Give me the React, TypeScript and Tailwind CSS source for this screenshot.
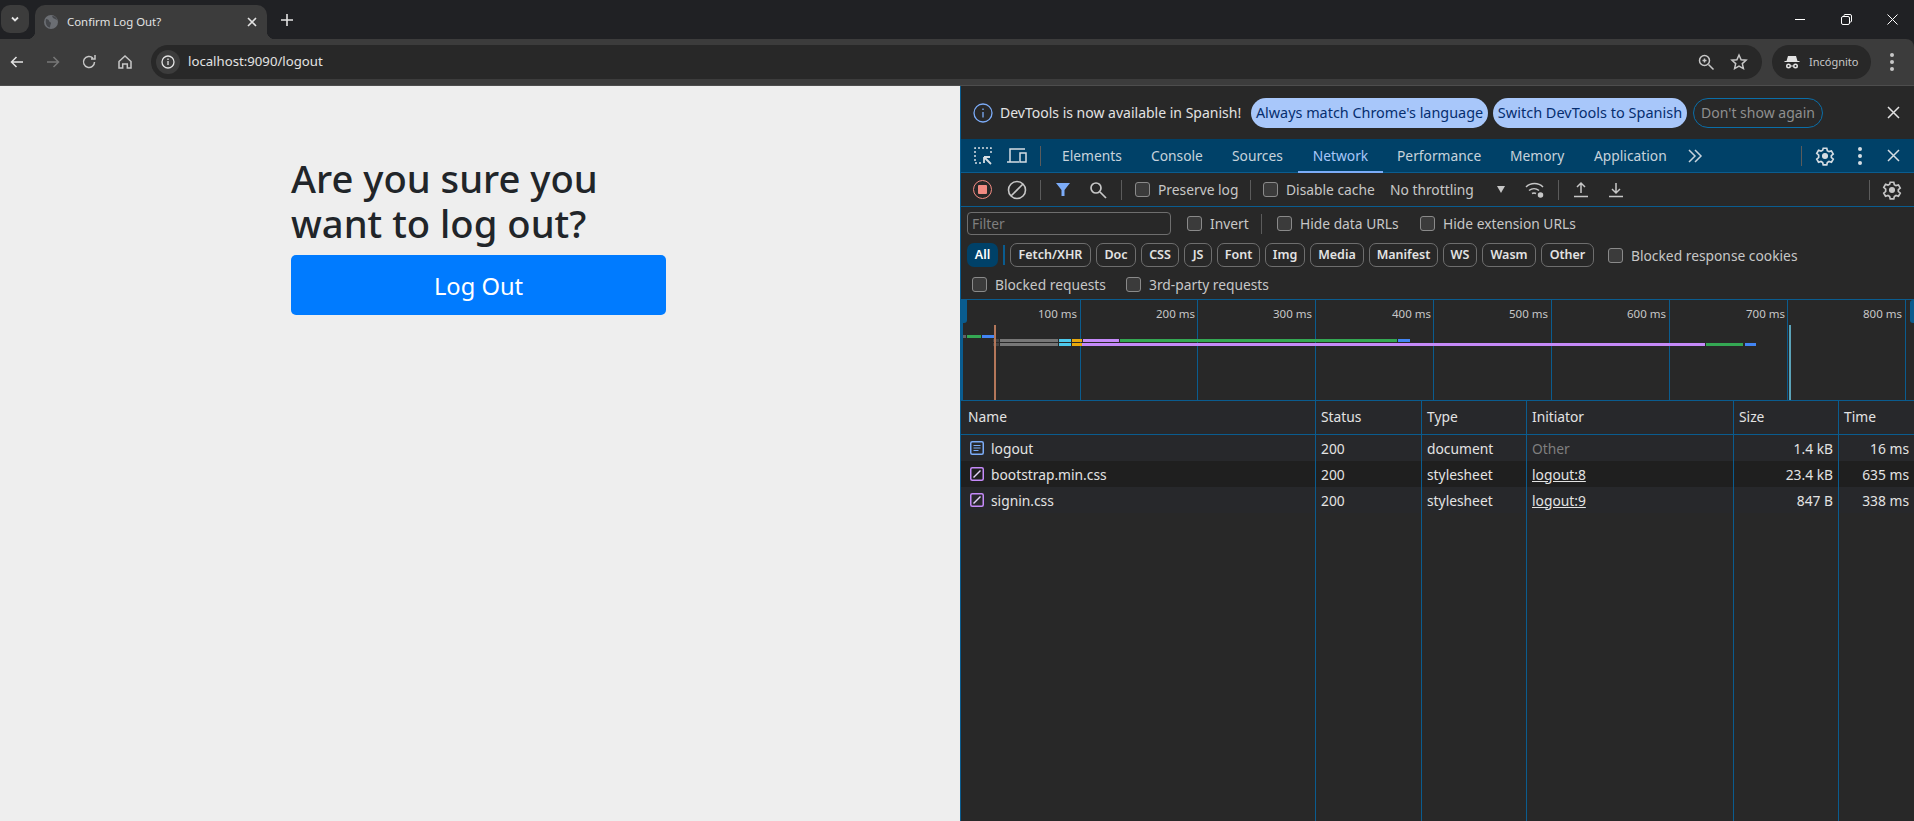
import type { ReactNode } from 'react';

const FONT = "font-['Noto_Sans','Open_Sans',sans-serif]";

const chips = [
  { name: 'Fetch/XHR', w: 'w-[81px]' },
  { name: 'Doc', w: 'w-[40px]' },
  { name: 'CSS', w: 'w-[38px]' },
  { name: 'JS', w: 'w-[28px]' },
  { name: 'Font', w: 'w-[43px]' },
  { name: 'Img', w: 'w-[40px]' },
  { name: 'Media', w: 'w-[54px]' },
  { name: 'Manifest', w: 'w-[69px]' },
  { name: 'WS', w: 'w-[34px]' },
  { name: 'Wasm', w: 'w-[54px]' },
  { name: 'Other', w: 'w-[53px]' },
];

const ticks = [
  { label: '100 ms', line: 'left-[119px]', text: 'right-[837px]' },
  { label: '200 ms', line: 'left-[236px]', text: 'right-[719px]' },
  { label: '300 ms', line: 'left-[354px]', text: 'right-[602px]' },
  { label: '400 ms', line: 'left-[472px]', text: 'right-[483px]' },
  { label: '500 ms', line: 'left-[590px]', text: 'right-[366px]' },
  { label: '600 ms', line: 'left-[708px]', text: 'right-[248px]' },
  { label: '700 ms', line: 'left-[826px]', text: 'right-[129px]' },
  { label: '800 ms', line: 'left-[944px]', text: 'right-[12px]' },
];

const bars = [
  'left-[2px] top-[35px] w-[3px] bg-[#5f6368]',
  'left-[6px] top-[35px] w-[14px] bg-[#34a853]',
  'left-[21px] top-[35px] w-[12px] bg-[#4285f4]',
  'left-[32px] top-[39px] w-[6px] bg-[#444]',
  'left-[39px] top-[39px] w-[58px] bg-[#777]',
  'left-[98px] top-[39px] w-[12px] bg-[#4dc9ec]',
  'left-[111px] top-[39px] w-[10px] bg-[#e8a90c]',
  'left-[122px] top-[39px] w-[36px] bg-[#c58af9]',
  'left-[159px] top-[39px] w-[277px] bg-[#34a853]',
  'left-[437px] top-[39px] w-[12px] bg-[#4285f4]',
  'left-[32px] top-[43px] w-[6px] bg-[#444]',
  'left-[39px] top-[43px] w-[58px] bg-[#777]',
  'left-[98px] top-[43px] w-[12px] bg-[#4dc9ec]',
  'left-[111px] top-[43px] w-[10px] bg-[#e8a90c]',
  'left-[121px] top-[43px] w-[623px] bg-[#c58af9]',
  'left-[745px] top-[43px] w-[37px] bg-[#34a853]',
  'left-[784px] top-[43px] w-[11px] bg-[#4285f4]',
];

type Cell = { text: string; kind?: 'muted' | 'link' };

const columns: { title: string; w: string; right?: boolean; cells: Cell[] }[] = [
  { title: 'Status', w: 'w-[106px]', cells: [{ text: '200' }, { text: '200' }, { text: '200' }] },
  { title: 'Type', w: 'w-[105px]', cells: [{ text: 'document' }, { text: 'stylesheet' }, { text: 'stylesheet' }] },
  {
    title: 'Initiator',
    w: 'w-[207px]',
    cells: [
      { text: 'Other', kind: 'muted' },
      { text: 'logout:8', kind: 'link' },
      { text: 'logout:9', kind: 'link' },
    ],
  },
  { title: 'Size', w: 'w-[105px]', right: true, cells: [{ text: '1.4 kB' }, { text: '23.4 kB' }, { text: '847 B' }] },
  { title: 'Time', w: 'w-[75px]', right: true, cells: [{ text: '16 ms' }, { text: '635 ms' }, { text: '338 ms' }] },
];

function Icon({ children, size = 18, className = '' }: { children: ReactNode; size?: number; className?: string }) {
  return (
    <svg width={size} height={size} viewBox="0 0 18 18" fill="none" stroke="currentColor" strokeWidth={1.5} className={className}>
      {children}
    </svg>
  );
}

function Gear({ className = '' }: { className?: string }) {
  return (
    <Icon className={className} size={20}>
      <path d="M7.4 2h3.2l.5 2.2 1.5.9 2.2-.7 1.6 2.8-1.7 1.5v1.600l1.700 1.500-1.600 2.800-2.200-.7-1.500.9-.5 2.200H7.400l-.5-2.200-1.500-.9-2.200.7-1.600-2.800 1.700-1.500V8.200L1.600 6.700l1.600-2.800 2.200.7 1.500-.9z" />
      <circle cx="9" cy="9" r="2" fill="currentColor" />
    </Icon>
  );
}

function Kebab({ className = '' }: { className?: string }) {
  return (
    <div className={`flex flex-col items-center gap-[3px] ${className}`}>
      <span className="size-[4px] rounded-full bg-current" />
      <span className="size-[4px] rounded-full bg-current" />
      <span className="size-[4px] rounded-full bg-current" />
    </div>
  );
}

function Check({ label, className = '' }: { label: string; className?: string }) {
  return (
    <div className={`flex items-center ${className}`}>
      <span className="size-[15px] shrink-0 rounded-[3px] border border-[#8a8a8a] bg-[#3b3b3b]" />
      <span className="ml-[8px] whitespace-nowrap pt-[2px] text-[#c7c7c7]">{label}</span>
    </div>
  );
}

function Divider({ className = '' }: { className?: string }) {
  return <span className={`h-[20px] w-px shrink-0 bg-[#5b5b5b] ${className}`} />;
}

function ResourceIcon({ doc }: { doc: boolean }) {
  const tone = doc ? '#7cacf8' : '#c58af9';
  return (
    <svg width="14" height="14" viewBox="0 0 14 14" fill="none" className="mr-[7px] shrink-0">
      <rect x=".75" y=".75" width="12.5" height="12.5" rx="1.5" stroke={tone} strokeWidth="1.5" />
      {doc ? (
        <path d="M3.500 4.500h7M3.500 7h7M3.500 9.500h5" stroke={tone} strokeWidth="1.200" />
      ) : (
        <path d="M3.500 10.500 10.500 3.500" stroke="#e3d4f7" strokeWidth="1.500" />
      )}
    </svg>
  );
}

function BrowserChrome() {
  return (
    <header className="shrink-0 bg-[#202124] text-[#e3e3e3]">
      <div className="flex h-[39px] items-end">
        <button className="mb-[6px] ml-[1px] flex h-[28px] w-[28px] items-center justify-center rounded-[9px] bg-[#3c3c3c]">
          <svg width="12" height="12" viewBox="0 0 12 12" fill="none" stroke="currentColor" strokeWidth="1.8">
            <path d="m3 4.500 3 3 3-3" />
          </svg>
        </button>
        <div className="relative ml-[6px] flex h-[34px] w-[232px] items-center rounded-t-[10px] bg-[#3c3c3c] pl-[9px] pr-[10px]">
          <span className="absolute bottom-0 left-[-8px] size-[8px] bg-[radial-gradient(circle_at_0_0,#202124_8px,#3c3c3c_8.5px)]" />
          <span className="absolute bottom-0 right-[-8px] size-[8px] bg-[radial-gradient(circle_at_100%_0,#202124_8px,#3c3c3c_8.5px)]" />
          <svg width="14" height="14" viewBox="0 0 14 14" className="shrink-0">
            <circle cx="7" cy="7" r="7" fill="#6b6e73" />
            <path d="M2 4c2 0 3 1 3 2s2 1 2 2-1 2-1 4.500C3 12 1 9 2 4Zm6-3 1 2 2 1 2 1c0-2-2-4-5-4Z" fill="#45474b" />
          </svg>
          <span className="ml-[9px] flex-1 truncate text-[11.4px]">Confirm Log Out?</span>
          <svg width="10" height="10" viewBox="0 0 10 10" stroke="currentColor" strokeWidth="1.6">
            <path d="m1 1 8 8M9 1 1 9" />
          </svg>
        </div>
        <svg width="14" height="14" viewBox="0 0 14 14" stroke="#e3e3e3" strokeWidth="1.6" className="mb-[12px] ml-[13px]">
          <path d="M7 1v12M1 7h12" />
        </svg>
        <div className="mb-[14px] ml-auto flex items-center">
          <span className="mr-[36px] h-px w-[10px] bg-white" />
          <svg width="11" height="11" viewBox="0 0 11 11" fill="none" stroke="#fff" className="mr-[35px]">
            <path d="M3 2.500V1.500a1 1 0 0 1 1-1h5a1.500 1.500 0 0 1 1.500 1.500v5a1 1 0 0 1-1 1H8.500" />
            <rect x=".5" y="2.500" width="8" height="8" rx="1.500" />
          </svg>
          <svg width="11" height="11" viewBox="0 0 11 11" stroke="#fff" className="mr-[16px]">
            <path d="m.5.5 10 10M10.500.5l-10 10" />
          </svg>
        </div>
      </div>
      <div className="flex h-[47px] items-center rounded-tr-[8px] border-b border-[#4d4d4d] bg-[#3c3c3c]">
        <Icon className="ml-[8px]" size={18}>
          <path d="M15 9H3.500M8.500 4l-5 5 5 5" />
        </Icon>
        <Icon className="ml-[18px] text-[#777]" size={18}>
          <path d="M3 9h11.500M9.500 4l5 5-5 5" />
        </Icon>
        <Icon className="ml-[18px] text-[#c7c7c7]" size={18}>
          <path d="M14.500 9a5.500 5.500 0 1 1-1.600-3.900M15 2v4h-4" />
        </Icon>
        <Icon className="ml-[18px] text-[#c7c7c7]" size={18}>
          <path d="M3 8.500 9 3l6 5.500V15h-3.700v-4H6.700v4H3z" />
        </Icon>
        <div className="ml-[17px] flex h-[34px] w-[1611px] items-center rounded-full bg-[#282828] pl-[5px]">
          <span className="flex size-[24px] items-center justify-center rounded-full bg-[#3c3c3c]">
            <svg width="14" height="14" viewBox="0 0 14 14" fill="none" stroke="#e3e3e3" strokeWidth="1.300">
              <circle cx="7" cy="7" r="6" />
              <path d="M7 6v4M7 3.600v1.300" />
            </svg>
          </span>
          <span className="ml-[8px] text-[13.2px]">localhost:9090/logout</span>
          <svg width="18" height="18" viewBox="0 0 18 18" fill="none" stroke="#c7c7c7" strokeWidth="1.500" className="ml-auto">
            <circle cx="7.500" cy="7.500" r="5" />
            <path d="m11.500 11.500 5 5M5.500 7.500h4M7.500 5.500v4" />
          </svg>
          <svg width="18" height="18" viewBox="0 0 18 18" fill="none" stroke="#c7c7c7" strokeWidth="1.500" className="ml-[15px] mr-[14px]">
            <path d="m9 2 2.100 4.700 5 .5-3.800 3.400 1.100 5L9 13l-4.400 2.600 1.100-5L1.900 7.200l5-.5z" />
          </svg>
        </div>
        <div className="ml-[10px] flex h-[34px] w-[99px] items-center rounded-full bg-[#282828] pl-[12px] text-[11px] text-[#c7c7c7]">
          <svg width="16" height="16" viewBox="0 0 16 16" fill="#e3e3e3">
            <path d="M4 2h8l1.500 5h2v1H.5V7h2zM4.500 9.500a2.500 2.500 0 1 0 0 5 2.500 2.500 0 0 0 0-5Zm7 0a2.500 2.500 0 1 0 0 5 2.500 2.500 0 0 0 0-5Zm-7 1.500a1 1 0 1 1 0 2 1 1 0 0 1 0-2Zm7 0a1 1 0 1 1 0 2 1 1 0 0 1 0-2ZM7 11.500h2v1H7z" />
          </svg>
          <span className="ml-[9px]">Incógnito</span>
        </div>
        <Kebab className="ml-[19px] text-[#c7c7c7]" />
      </div>
    </header>
  );
}

function LogoutPage() {
  return (
    <main className="w-[960px] shrink-0 bg-[#eeeeee] pl-[291px] pt-[70px] text-[#212529]">
      <h2 className="w-[375px] text-[38.2px] font-medium leading-[45px]">Are you sure you want to log out?</h2>
      <button className="mt-[9px] h-[60px] w-[375px] rounded-[5px] bg-[#007bff] pt-[4px] text-[23.7px] text-white">Log Out</button>
    </main>
  );
}

function Overview() {
  return (
    <div className="relative h-[101px] shrink-0 border-b border-[#0a5c8f] text-[11.5px] text-[#c7c7c7]">
      {ticks.map((t) => (
        <div key={t.label}>
          <span className={`absolute top-0 h-full w-px bg-[#0a5c8f] ${t.line}`} />
          <span className={`absolute top-[5px] leading-[18px] ${t.text}`}>{t.label}</span>
        </div>
      ))}
      {bars.map((b) => (
        <span key={b} className={`absolute h-[3px] ${b}`} />
      ))}
      <span className="absolute left-[33px] top-[25px] h-[75px] w-[2px] bg-[#b4775a]" />
      <span className="absolute left-[828px] top-[25px] h-[75px] w-[2px] bg-[#5ba3b8]" />
      <span className="absolute left-0 top-0 h-[100px] w-[2px] bg-[#0a5c8f]" />
      <span className="absolute left-0 top-0 h-[23px] w-[6px] rounded-br-[3px] bg-[#0a5c8f]" />
      <span className="absolute right-0 top-0 h-[23px] w-[4px] rounded-l-[3px] bg-[#0a5c8f]" />
    </div>
  );
}

function NetworkTable() {
  const rowTone = ['bg-[#27282b]', 'bg-[#1f1f1f]', 'bg-[#27282b]'];
  const names = ['logout', 'bootstrap.min.css', 'signin.css'];
  return (
    <div className="flex min-h-0 flex-1 bg-[#282828] text-[13.8px] text-[#e3e3e3]">
      <div className="w-[355px] shrink-0 border-r border-[#0a5c8f]">
        <div className="flex h-[34px] items-center border-b border-[#0a5c8f] bg-[#27282b] pl-[7px]">Name</div>
        {names.map((name, i) => (
          <div key={name} className={`flex h-[26px] items-center pl-[9px] ${rowTone[i]}`}>
            <ResourceIcon doc={i === 0} />
            <span className="pt-[2px]">{name}</span>
          </div>
        ))}
      </div>
      {columns.map((col) => (
        <div key={col.title} className={`shrink-0 border-r border-[#0a5c8f] last:border-r-0 ${col.w}`}>
          <div className="flex h-[34px] items-center border-b border-[#0a5c8f] bg-[#27282b] px-[5px]">{col.title}</div>
          {col.cells.map((cell, i) => (
            <div
              key={i}
              className={`flex h-[26px] items-center px-[5px] pt-[2px] ${rowTone[i]} ${col.right ? 'justify-end' : ''} ${cell.kind === 'muted' ? 'text-[#7f7f7f]' : ''} ${cell.kind === 'link' ? 'underline' : ''}`}
            >
              {cell.text}
            </div>
          ))}
        </div>
      ))}
    </div>
  );
}

function DevTools() {
  return (
    <section className="flex min-w-0 flex-1 flex-col border-l border-[#0a5c8f] bg-[#282828] text-[13.8px]">
      {/* language infobar */}
      <div className="flex h-[53px] shrink-0 items-center text-[#e3e3e3]">
        <svg width="20" height="20" viewBox="0 0 20 20" fill="none" stroke="#7cacf8" strokeWidth="1.300" className="ml-[12px]">
          <circle cx="10" cy="10" r="9" />
          <path d="M10 9v5.500M10 5.500V7" />
        </svg>
        <span className="ml-[7px] w-[244px] whitespace-nowrap text-[14px]">DevTools is now available in Spanish!</span>
        <button className="ml-[7px] h-[30px] w-[237px] whitespace-nowrap rounded-full bg-[#a8c7fa] text-[14.4px] text-[#062e6f]">Always match Chrome's language</button>
        <button className="ml-[5px] h-[30px] w-[194px] whitespace-nowrap rounded-full bg-[#a8c7fa] text-[14.5px] text-[#062e6f]">Switch DevTools to Spanish</button>
        <button className="ml-[6px] h-[30px] w-[130px] whitespace-nowrap rounded-full border border-[#0a6ea8] text-[14px] text-[#8f8f8f]">Don't show again</button>
        <svg width="13" height="13" viewBox="0 0 13 13" stroke="#e3e3e3" strokeWidth="1.500" className="ml-[64px]">
          <path d="m1 1 11 11M12 1 1 12" />
        </svg>
      </div>

      {/* panel tabs */}
      <div className="flex h-[34px] shrink-0 items-center border-b border-[#0a5c8f] bg-[#004168] text-[#c7d3dc]">
        <svg width="20" height="20" viewBox="0 0 20 20" fill="none" stroke="#d5dde3" strokeWidth="1.500" strokeDasharray="2 2" className="ml-[12px]">
          <path d="M8 17H2V2h16v6" />
          <path d="M11 11h6M11 11v6M11 11l7 7" strokeDasharray="none" strokeWidth="1.800" />
        </svg>
        <svg width="22" height="18" viewBox="0 0 22 18" fill="none" stroke="#d5dde3" strokeWidth="1.500" className="ml-[13px]">
          <path d="M1 15h12M4 15V2h15" />
          <rect x="14" y="6" width="6" height="9" />
        </svg>
        <Divider className="ml-[12px]" />
        <span className="ml-[21px] w-[89px] pt-[2px]">Elements</span>
        <span className="w-[81px] pt-[2px]">Console</span>
        <span className="w-[66px] pt-[2px]">Sources</span>
        <div className="relative flex h-full w-[85px] items-center justify-center pt-[2px] text-[#a8c7fa]">
          Network
          <span className="absolute bottom-[-1px] left-0 h-[2px] w-full bg-[#7cacf8]" />
        </div>
        <span className="ml-[14px] w-[113px] pt-[2px]">Performance</span>
        <span className="w-[84px] pt-[2px]">Memory</span>
        <span className="w-[93px] pt-[2px]">Application</span>
        <svg width="16" height="14" viewBox="0 0 16 14" fill="none" stroke="#c7d3dc" strokeWidth="1.500">
          <path d="m2 1 6 6-6 6M8 1l6 6-6 6" />
        </svg>
        <Divider className="ml-[98px]" />
        <Gear className="ml-[13px] text-[#d5dde3]" />
        <Kebab className="ml-[23px] text-[#d5dde3]" />
        <svg width="13" height="13" viewBox="0 0 13 13" stroke="#d5dde3" strokeWidth="1.500" className="ml-[25px]">
          <path d="m1 1 11 11M12 1 1 12" />
        </svg>
      </div>

      {/* network toolbar */}
      <div className="flex h-[34px] shrink-0 items-center border-b border-[#0a5c8f] text-[#c7c7c7]">
        <span className="ml-[12px] flex size-[19px] items-center justify-center rounded-full border-[1.5px] border-[#f28b82]">
          <span className="size-[9px] rounded-[1px] bg-[#f28b82]" />
        </span>
        <svg width="20" height="20" viewBox="0 0 20 20" fill="none" stroke="#c7c7c7" strokeWidth="1.600" className="ml-[15px]">
          <circle cx="10" cy="10" r="8.500" />
          <path d="m4 16 12-12" />
        </svg>
        <Divider className="ml-[13px]" />
        <svg width="16" height="15" viewBox="0 0 16 15" fill="#7cacf8" className="ml-[14px]">
          <path d="M1 1h14L9.500 8v6h-3V8z" />
        </svg>
        <svg width="18" height="18" viewBox="0 0 18 18" fill="none" stroke="#c7c7c7" strokeWidth="1.700" className="ml-[18px]">
          <circle cx="7" cy="7" r="5" />
          <path d="m11 11 6 6" />
        </svg>
        <Divider className="ml-[14px]" />
        <Check label="Preserve log" className="ml-[13px] w-[115px]" />
        <Divider />
        <Check label="Disable cache" className="ml-[12px] w-[127px]" />
        <span className="w-[85px] whitespace-nowrap pt-[2px]">No throttling</span>
        <svg width="10" height="8" viewBox="0 0 10 8" fill="#c7c7c7" className="ml-[21px]">
          <path d="M1 0h8L5 7z" />
        </svg>
        <svg width="22" height="18" viewBox="0 0 22 18" fill="none" stroke="#c7c7c7" strokeWidth="1.500" className="ml-[18px]">
          <path d="M2 6a12 12 0 0 1 17 0M5 9.500a8 8 0 0 1 10 0M8 12.500a4 4 0 0 1 4 0" />
          <circle cx="16.500" cy="14" r="2" fill="#c7c7c7" />
        </svg>
        <Divider className="ml-[12px]" />
        <svg width="16" height="18" viewBox="0 0 16 18" fill="none" stroke="#c7c7c7" strokeWidth="1.500" className="ml-[14px]">
          <path d="M8 12V2M4 6l4-4 4 4M1 15.500h14" />
        </svg>
        <svg width="16" height="18" viewBox="0 0 16 18" fill="none" stroke="#c7c7c7" strokeWidth="1.500" className="ml-[19px]">
          <path d="M8 2v10M4 8l4 4 4-4M1 15.500h14" />
        </svg>
        <Divider className="ml-[245px]" />
        <Gear className="ml-[12px]" />
      </div>

      {/* filter rows */}
      <div className="flex h-[33px] shrink-0 items-center text-[#c7c7c7]">
        <span className="ml-[6px] flex h-[23px] w-[204px] items-center rounded-[4px] border border-[#6e6e6e] pl-[4px] pt-[1px] text-[#7f7f7f]">Filter</span>
        <Check label="Invert" className="ml-[16px] w-[74px]" />
        <Divider />
        <Check label="Hide data URLs" className="ml-[15px] w-[143px]" />
        <Check label="Hide extension URLs" />
      </div>
      <div className="flex h-[30px] shrink-0 items-center text-[12.5px] font-semibold text-[#e3e3e3]">
        <span className="ml-[6px] flex h-[24px] w-[31px] items-center justify-center rounded-[7px] bg-[#004168] pt-[1px] text-white">All</span>
        <span className="ml-[5px] h-[20px] w-[2px] bg-[#0a5c8f]" />
        <div className="ml-[5px] flex gap-[5px]">
          {chips.map((chip) => (
            <span key={chip.name} className={`flex h-[24px] items-center justify-center rounded-[7px] border border-[#6e6e6e] pt-[1px] ${chip.w}`}>
              {chip.name}
            </span>
          ))}
        </div>
        <Check label="Blocked response cookies" className="ml-[14px] text-[13.8px] font-normal" />
      </div>
      <div className="flex h-[30px] shrink-0 items-center border-b border-[#0a5c8f]">
        <Check label="Blocked requests" className="ml-[11px] w-[154px]" />
        <Check label="3rd-party requests" />
      </div>

      <Overview />
      <NetworkTable />
    </section>
  );
}

export default function App() {
  return (
    <div className={`flex h-[821px] w-[1914px] flex-col overflow-hidden ${FONT}`}>
      <BrowserChrome />
      <div className="flex min-h-0 flex-1">
        <LogoutPage />
        <DevTools />
      </div>
    </div>
  );
}
